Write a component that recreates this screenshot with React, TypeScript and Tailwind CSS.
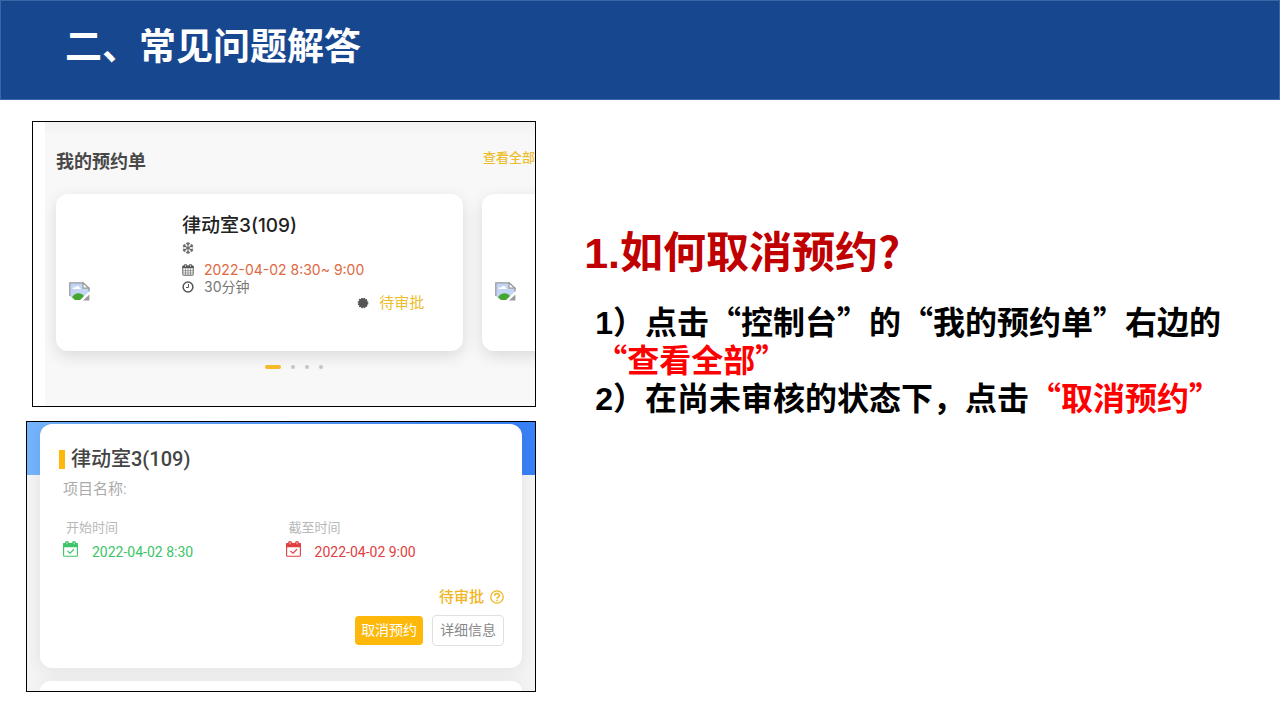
import type { ReactNode } from "react";
import { FaRegSnowflake } from "react-icons/fa";

function Latin({ children }: { children: ReactNode }) {
  return <span className="font-['Liberation_Sans','Noto_Sans_CJK_SC',sans-serif] leading-none">{children}</span>;
}

function CalendarGridIcon() {
  return (
    <svg viewBox="0 0 24 24" className="h-3 w-3 text-[#555]" fill="none" stroke="currentColor" aria-hidden="true">
      <rect x="1.5" y="4" width="21" height="18.5" rx="1" strokeWidth="1.8" />
      <path d="M1 3.5h22v5H1z" fill="currentColor" stroke="none" />
      <path d="M7 0.5v6M17 0.5v6" strokeWidth="5" />
      <path d="M7 2v4M17 2v4" stroke="#fff" strokeWidth="1.2" />
      <path d="M7 9v13M12 9v13M17 9v13M2 13.5h20M2 18h20" strokeWidth="1.1" />
    </svg>
  );
}

function ClockIcon() {
  return (
    <svg viewBox="0 0 24 24" className="h-3 w-3 text-[#555]" fill="none" stroke="currentColor" strokeWidth="3" aria-hidden="true">
      <circle cx="12" cy="12" r="9.8" />
      <path d="M13 6v7H8" strokeWidth="2" />
    </svg>
  );
}

function ScallopIcon() {
  return (
    <svg viewBox="0 0 24 24" className="h-3 w-3 text-[#555]" aria-hidden="true">
      <circle cx="12" cy="12" r="9" fill="currentColor" />
      <circle cx="12" cy="12" r="9.2" fill="none" stroke="currentColor" strokeWidth="3" strokeDasharray="3 1.817" />
    </svg>
  );
}

function CalendarCheckIcon() {
  return (
    <svg viewBox="0 0 30 32" className="h-4 w-[15px]" fill="none" stroke="currentColor" strokeWidth="2.2" aria-hidden="true">
      <rect x="1.2" y="5" width="27.6" height="25.5" rx="1.5" />
      <path d="M0.5 4h29v8.5h-29z" fill="currentColor" stroke="none" />
      <circle cx="8" cy="4" r="4" fill="currentColor" stroke="none" />
      <circle cx="22" cy="4" r="4" fill="currentColor" stroke="none" />
      <path d="M8 2.5v4M22 2.5v4" stroke="#fff" strokeWidth="1.4" />
      <path d="M9 20l5 4.5 8-8" />
    </svg>
  );
}

function QuestionIcon() {
  return (
    <svg viewBox="0 0 28 28" className="h-3.5 w-3.5" fill="none" stroke="currentColor" strokeWidth="2.6" aria-hidden="true">
      <circle cx="14" cy="14" r="12.4" />
      <path d="M9.4 11.4c0-6 9.4-5.8 9.4-0.5 0 3.4-4.7 3-4.7 6.6" strokeWidth="3" />
      <path d="M14.1 19.4v3" strokeWidth="3" />
    </svg>
  );
}

function MissingImage() {
  return (
    <svg viewBox="0 0 21 19" className="h-[19px] w-[21px]" role="img" aria-label="图片">
      <path d="M0.8 0.8H14L20 6.2V9.5L11 18H6L0.8 14z" fill="#c3d5f5" />
      <path d="M3.5 7c0-2 2.2-2 2.6-1.2C7 3 10.500 3.600 10.500 5.600c1.400 0 1.400 1.400 1 1.400z" fill="#fff" />
      <path d="M3 15.300c3-5 9-5 12-1.300L11 18H6z" fill="#45a52c" />
      <path d="M0.8 14V0.8H14L20 6.2V9.500" fill="none" stroke="#9a9a9a" strokeWidth="1.300" />
      <path d="M14 0.8V6.2H20z" fill="#fff" stroke="#9a9a9a" strokeWidth="1.200" />
      <path d="M20.400 12.500V18.400H14z" fill="#9a9a9a" />
    </svg>
  );
}

function BookingPreview() {
  return (
    <section className="ml-1.5 overflow-hidden border border-black bg-white pl-3">
      <div className="bg-[#f8f8f8] bg-linear-to-b from-[#f2f2f2] to-[#f8f8f8] to-5% pt-[25px] pb-[37px] font-[Inter,'Noto_Sans_CJK_SC',sans-serif]">
        <div className="flex items-start justify-between pl-[11px]">
          <h3 className="text-[18px] leading-[30px] font-bold text-[#484848]">我的预约单</h3>
          <a href="#all" className="text-[13px] leading-5 font-medium text-[#edbd2c]">查看全部</a>
        </div>
        <div className="mt-[17px] flex gap-[19px] pl-[11px]">
          <article className="flex w-[85%] shrink-0 rounded-xl bg-white pt-5 pr-[39px] pb-10 pl-[13px] shadow-[0_5px_16px_rgba(0,0,0,0.12)]">
            <div className="mb-2.5 w-[113px] shrink-0 self-end">
              <MissingImage />
            </div>
            <div className="flex-1">
              <h4 className="text-[19px] leading-6 font-medium text-[#222]">律动室3(109)</h4>
              <div className="flex h-[19px] items-center">
                <FaRegSnowflake className="h-3 w-3 text-[#666]" aria-hidden="true" />
              </div>
              <p className="mt-1 flex items-center gap-2.5 text-[14px] leading-[18px] text-[#e0683f]">
                <CalendarGridIcon />
                2022-04-02 8:30~ 9:00
              </p>
              <p className="flex items-center gap-2.5 text-[14px] leading-4 text-[#777]">
                <ClockIcon />
                30分钟
              </p>
              <p className="flex items-center justify-end gap-2.5 text-[15px] leading-4 text-[#edbd2c]">
                <ScallopIcon />
                待审批
              </p>
            </div>
          </article>
          <article className="flex w-[85%] shrink-0 rounded-xl bg-white pb-10 pl-[13px] shadow-[0_5px_16px_rgba(0,0,0,0.12)]">
            <div className="mb-2.5 self-end">
              <MissingImage />
            </div>
          </article>
        </div>
        <div className="mt-3.5 flex items-center justify-center gap-2.5 pl-2">
          <span className="h-1 w-4 rounded-full bg-[#f5b92a]" />
          <span className="size-1 rounded-full bg-[#c4c4c4]" />
          <span className="size-1 rounded-full bg-[#c4c4c4]" />
          <span className="size-1 rounded-full bg-[#c4c4c4]" />
        </div>
      </div>
    </section>
  );
}

function TimeField({ label, value, tone }: { label: string; value: string; tone: string }) {
  return (
    <div>
      <dt className="pl-[3px] text-[13px] leading-5 text-[#b8b8b8]">{label}</dt>
      <dd className={`mt-[3px] flex gap-3.5 text-[14px] leading-[22px] ${tone}`}>
        <CalendarCheckIcon />
        {value}
      </dd>
    </div>
  );
}

function BookingDetail() {
  return (
    <section className="mt-3.5 overflow-hidden border border-black bg-[#f3f3f3] bg-[linear-gradient(90deg,#74b4fb,#3880f6)] bg-[length:100%_53px] bg-no-repeat px-[13px] pt-0.5 font-[Roboto,'Noto_Sans_CJK_SC',sans-serif]">
      <article className="rounded-xl bg-white pt-[21px] pr-[18px] pb-[22px] pl-[19px] shadow-[0_2px_14px_rgba(0,0,0,0.07)]">
        <h3 className="flex items-center gap-1.5 text-[20px] leading-7 font-medium text-[#444]">
          <span className="h-[19px] w-1.5 bg-[#fdb80a]" />
          律动室3(109)
        </h3>
        <p className="mt-1.5 pl-1 text-[15px] leading-5 text-[#aaa]">项目名称:</p>
        <dl className="mt-[19px] grid grid-cols-2 gap-x-1 pl-1">
          <TimeField label="开始时间" value="2022-04-02 8:30" tone="text-[#3cc468]" />
          <TimeField label="截至时间" value="2022-04-02 9:00" tone="text-[#e04040]" />
        </dl>
        <p className="mt-6 flex items-center justify-end gap-1.5 text-[15px] leading-5 font-medium text-[#f2b51f]">
          待审批
          <QuestionIcon />
        </p>
        <div className="mt-2 flex items-center justify-end gap-[9px] text-[14px] leading-[29px]">
          <button type="button" className="rounded-sm bg-[#fdb80a] px-1.5 text-white">取消预约</button>
          <button type="button" className="rounded-sm border border-[#e0e0e0] bg-white px-[7px] text-[#888]">详细信息</button>
        </div>
      </article>
      <div className="mt-[13px] h-2.5 rounded-t-xl bg-white shadow-[0_0_14px_rgba(0,0,0,0.07)]" />
    </section>
  );
}

export default function App() {
  return (
    <div lang="zh-CN" className="min-h-screen bg-white font-['Noto_Sans_CJK_SC',sans-serif]">
      <header className="border border-[#3a67a8] bg-[#17478f] pt-[15px] pr-6 pb-[27px] pl-16">
        <h1 className="text-[37px] leading-[56px] font-bold text-white">二、常见问题解答</h1>
      </header>
      <main className="grid grid-cols-[7fr_9fr] gap-12 pt-[21px] pr-10 pb-7 pl-[26px]">
        <div className="min-w-0">
          <BookingPreview />
          <BookingDetail />
        </div>
        <div className="min-w-0 pt-[98px] font-bold">
          <h2 className="text-[43px] leading-[60px] text-[#c00000]">
            <Latin>1.</Latin>如何取消预约?
          </h2>
          <ol className="mt-[22px] pl-[11px] text-[32px] leading-[38px] text-black">
            <li>
              <Latin>1</Latin>）点击“控制台”的“我的预约单”右边的
              <br />
              <span className="text-[#ff0000]">“查看全部”</span>
            </li>
            <li>
              <Latin>2</Latin>）在尚未审核的状态下，点击<span className="text-[#ff0000]">“取消预约”</span>
            </li>
          </ol>
        </div>
      </main>
    </div>
  );
}
